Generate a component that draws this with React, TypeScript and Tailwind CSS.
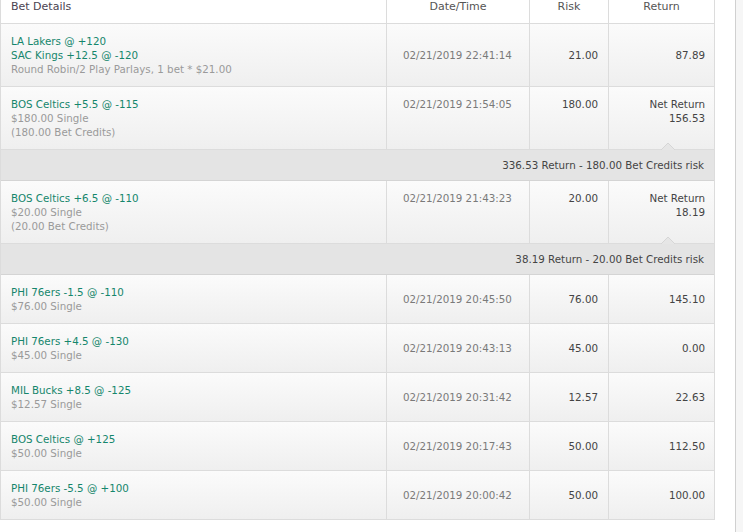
import React from "react";

type Bet = {
  lines: { text: string; green?: boolean }[];
  date: string;
  risk: string;
  ret: string[];
  top?: boolean;
  summary?: string;
};

const bets: Bet[] = [
  {
    lines: [
      { text: "LA Lakers @ +120", green: true },
      { text: "SAC Kings +12.5 @ -120", green: true },
      { text: "Round Robin/2 Play Parlays, 1 bet * $21.00" },
    ],
    date: "02/21/2019 22:41:14",
    risk: "21.00",
    ret: ["87.89"],
  },
  {
    lines: [
      { text: "BOS Celtics +5.5 @ -115", green: true },
      { text: "$180.00 Single" },
      { text: "(180.00 Bet Credits)" },
    ],
    date: "02/21/2019 21:54:05",
    risk: "180.00",
    ret: ["Net Return", "156.53"],
    top: true,
    summary: "336.53 Return - 180.00 Bet Credits risk",
  },
  {
    lines: [
      { text: "BOS Celtics +6.5 @ -110", green: true },
      { text: "$20.00 Single" },
      { text: "(20.00 Bet Credits)" },
    ],
    date: "02/21/2019 21:43:23",
    risk: "20.00",
    ret: ["Net Return", "18.19"],
    top: true,
    summary: "38.19 Return - 20.00 Bet Credits risk",
  },
  {
    lines: [{ text: "PHI 76ers -1.5 @ -110", green: true }, { text: "$76.00 Single" }],
    date: "02/21/2019 20:45:50",
    risk: "76.00",
    ret: ["145.10"],
  },
  {
    lines: [{ text: "PHI 76ers +4.5 @ -130", green: true }, { text: "$45.00 Single" }],
    date: "02/21/2019 20:43:13",
    risk: "45.00",
    ret: ["0.00"],
  },
  {
    lines: [{ text: "MIL Bucks +8.5 @ -125", green: true }, { text: "$12.57 Single" }],
    date: "02/21/2019 20:31:42",
    risk: "12.57",
    ret: ["22.63"],
  },
  {
    lines: [{ text: "BOS Celtics @ +125", green: true }, { text: "$50.00 Single" }],
    date: "02/21/2019 20:17:43",
    risk: "50.00",
    ret: ["112.50"],
  },
  {
    lines: [{ text: "PHI 76ers -5.5 @ +100", green: true }, { text: "$50.00 Single" }],
    date: "02/21/2019 20:00:42",
    risk: "50.00",
    ret: ["100.00"],
  },
];

const grid = "grid grid-cols-[385px_143px_79px_106px]";

function BetRow({ bet }: { bet: Bet }) {
  const align = bet.top ? "items-start" : "items-center";
  return (
    <div className={`${grid} border-b border-[#dcdcdc] bg-gradient-to-b from-[#fbfbfb] to-[#efefef] text-[10.3px] leading-[14px]`}>
      <div className="flex flex-col py-[10px] pl-[10px]">
        {bet.lines.map((l, i) => (
          <div key={i} className={l.green ? "text-[#15866c]" : "text-[#9a9a9a]"}>
            {l.text}
          </div>
        ))}
      </div>
      <div className={`flex ${align} border-l border-[#dcdcdc] py-[10px] pl-[16px] text-[#7a7a7a]`}>
        {bet.date}
      </div>
      <div className={`flex ${align} justify-end border-l border-[#dcdcdc] py-[10px] pr-[10px] text-[#444]`}>
        {bet.risk}
      </div>
      <div className={`flex ${align} justify-end border-l border-[#dcdcdc] py-[10px] pr-[9px] text-[#444]`}>
        <div className="flex flex-col items-end">
          {bet.ret.map((r, i) => (
            <div key={i}>{r}</div>
          ))}
        </div>
      </div>
    </div>
  );
}

function Summary({ text }: { text: string }) {
  return (
    <div className="relative border-b border-[#d4d4d4] bg-[#e4e4e4] py-[8px] pr-[10px] text-right text-[10.3px] leading-[14px] text-[#444]">
      <svg
        className="absolute left-[660px] top-[-7px]"
        width="14"
        height="7"
        viewBox="0 0 14 7"
      >
        <polygon points="0,7 7,0 14,7" fill="#e6e6e6" />
        <polyline points="0,7 7,0 14,7" fill="none" stroke="#d6d6d6" strokeWidth="1" />
      </svg>
      {text}
    </div>
  );
}

export default function App() {
  return (
    <div
      className="flex h-[532px] w-[743px] bg-white"
      style={{ fontFamily: '"DejaVu Sans", Verdana, sans-serif' }}
    >
      <div className="flex w-[715px] flex-col self-start border-l border-r border-[#dcdcdc]">
        <div className={`${grid} h-[24px] border-b border-[#dcdcdc] bg-white text-[11px] leading-[14px]`}>
          <div className="pl-[10px] text-[#4b4351]">Bet Details</div>
          <div className="border-l border-[#dcdcdc] text-center text-[#555]">Date/Time</div>
          <div className="border-l border-[#dcdcdc] text-center text-[#555]">Risk</div>
          <div className="border-l border-[#dcdcdc] text-center text-[#555]">Return</div>
        </div>
        {bets.map((b, i) => (
          <React.Fragment key={i}>
            <BetRow bet={b} />
            {b.summary && <Summary text={b.summary} />}
          </React.Fragment>
        ))}
      </div>
      <div className="w-[20px]" />
      <div className="flex-1 border-l border-[#d0d0d0] bg-[#f6f6f6]" />
    </div>
  );
}
